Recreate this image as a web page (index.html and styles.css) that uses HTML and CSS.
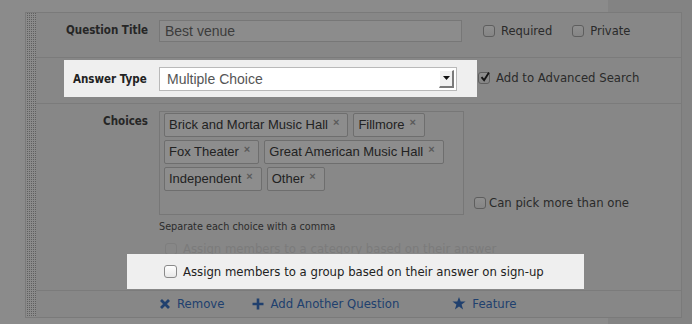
FILE: index.html
```html
<!DOCTYPE html>
<html>
<head>
<meta charset="utf-8">
<link rel="stylesheet" href="styles.css">
</head>
<body>
<div class="panel">
  <div class="handle"></div>
  <div class="main">
    <div class="row row-title">
      <div class="label">Question Title</div>
      <div class="textbox">Best venue</div>
      <label class="check check-req"><span class="box"></span>Required</label>
      <label class="check check-priv"><span class="box"></span>Private</label>
    </div>
    <div class="row row-type">
      <div class="spot spot-type">
        <div class="label label-type">Answer Type</div>
        <div class="select">
          <span class="select-text">Multiple Choice</span>
          <span class="select-btn"><svg width="7" height="4" viewBox="0 0 7 4"><path d="M0 0h7L3.5 4z" fill="#111"/></svg></span>
        </div>
      </div>
      <label class="check check-adv"><span class="box box-on"><svg width="12" height="12" viewBox="0 0 12 12"><path d="M2.5 6.2l2.6 3L10 1.5" fill="none" stroke="#151515" stroke-width="1.9"/></svg></span>Add to Advanced Search</label>
    </div>
    <div class="row row-choices">
      <div class="label label-choices">Choices</div>
      <div class="choices-col">
        <div class="choices-line">
          <div class="tagbox">
            <span class="tag">Brick and Mortar Music Hall<i>×</i></span>
            <span class="tag">Fillmore<i>×</i></span>
            <span class="tag">Fox Theater<i>×</i></span>
            <span class="tag">Great American Music Hall<i>×</i></span>
            <span class="tag">Independent<i>×</i></span>
            <span class="tag">Other<i>×</i></span>
          </div>
          <label class="check check-multi"><span class="box"></span>Can pick more than one</label>
        </div>
        <div class="hint">Separate each choice with a comma</div>
        <label class="check check-faded"><span class="box"></span>Assign members to a category based on their answer</label>
        <div class="spot spot-group">
          <label class="check check-group"><span class="box box-light"></span>Assign members to a group based on their answer on sign-up</label>
        </div>
      </div>
    </div>
    <div class="row row-foot">
      <a class="act act-remove"><svg width="12" height="12" viewBox="0 0 12 12"><path d="M2 2l8 8M10 2l-8 8" stroke="#20406e" stroke-width="2.8" stroke-linecap="butt"/></svg>Remove</a>
      <a class="act act-add"><svg width="12" height="12" viewBox="0 0 12 12"><path d="M6 0.5v11M0.5 6h11" stroke="#20406e" stroke-width="2.6"/></svg>Add Another Question</a>
      <a class="act act-feat"><svg width="14" height="13" viewBox="0 0 14 13"><path d="M7 0l1.7 4.6h4.9l-4 2.9 1.5 4.9L7 9.5l-4.1 2.9 1.5-4.9-4-2.9h4.9z" fill="#20406e"/></svg>Feature</a>
    </div>
  </div>
</div>
</body>
</html>
```
FILE: styles.css
```css
html, body {
  margin: 0;
  padding: 0;
}
body {
  width: 692px;
  height: 324px;
  overflow: hidden;
  background: linear-gradient(to right, #8b8b8b 608px, #838383 608px);
  font-family: "DejaVu Sans", "Noto Sans", sans-serif;
  color: #262626;
}
.panel {
  box-sizing: border-box;
  margin: 12px 0 0 25px;
  width: 657px;
  height: 306px;
  border: 1px solid #7a7a7a;
  background: #878787;
  display: flex;
}
.handle {
  width: 10px;
  flex: none;
  background: #8b8b8b conic-gradient(#5f5f5f 25%, transparent 0) 0 0 / 2px 2px;
}
.main {
  flex: 1;
  display: flex;
  flex-direction: column;
}
.row {
  display: flex;
  box-sizing: border-box;
}
.label {
  width: 112px;
  flex: none;
  text-align: right;
  font-weight: bold;
  font-size: 11.5px;
  font-stretch: condensed;
  color: #262626;
  white-space: nowrap;
}
.row-title {
  height: 45px;
  border-bottom: 1px solid #7b7b7b;
  padding-top: 7px;
  align-items: flex-start;
}
.row-title .label {
  line-height: 21px;
  margin-right: 11px;
}
.textbox {
  box-sizing: border-box;
  width: 303px;
  height: 22px;
  border: 1px solid #777;
  background: #8c8c8c;
  font-family: "Liberation Sans", Arial, sans-serif;
  font-size: 14px;
  line-height: 20px;
  padding-left: 5px;
  color: #3c3c3c;
}
.check {
  display: flex;
  align-items: center;
  font-size: 11.7px;
  color: #2a2a2a;
  white-space: nowrap;
}
.box {
  box-sizing: border-box;
  width: 12px;
  height: 12px;
  border: 1px solid #5e5e5e;
  border-radius: 3px;
  background: linear-gradient(#8f8f8f, #858585);
  margin-right: 6px;
  flex: none;
  position: relative;
}
.box svg {
  position: absolute;
  left: 0;
  top: -2px;
}
.check-req {
  margin-left: 21px;
  height: 21px;
  font-size: 11.5px;
}
.check-priv {
  margin-left: 20px;
  height: 21px;
  font-size: 11.5px;
}
.row-type {
  height: 46px;
  border-bottom: 1px solid #7b7b7b;
  padding-top: 2px;
  align-items: flex-start;
}
.spot {
  background: #efefef;
  box-sizing: border-box;
}
.spot-type {
  margin-left: 28px;
  width: 413px;
  height: 37px;
  display: flex;
  align-items: center;
  padding-left: 9px;
}
.label-type {
  width: 75px;
  color: #222;
  margin-right: 11px;
  text-align: left;
}
.select {
  box-sizing: border-box;
  width: 298px;
  height: 24px;
  border: 1px solid #b9b9b9;
  background: #fff;
  display: flex;
  align-items: center;
  justify-content: space-between;
  padding: 0 2px 0 7px;
}
.select-text {
  font-family: "Liberation Sans", Arial, sans-serif;
  font-size: 14px;
  color: #555;
}
.select-btn {
  box-sizing: border-box;
  width: 15px;
  height: 18px;
  background: #f1f1f1;
  border-right: 2px solid #7a7a7a;
  border-bottom: 2px solid #7a7a7a;
  border-top: 1px solid #fff;
  border-left: 1px solid #fff;
  display: flex;
  align-items: center;
  justify-content: center;
}
.check-adv {
  margin-left: 1px;
  height: 35px;
}
.row-choices {
  padding-top: 7px;
  height: 187px;
  border-bottom: 1px solid #7b7b7b;
  align-items: flex-start;
}
.label-choices {
  margin-right: 11px;
  line-height: 14px;
  padding-top: 3px;
}
.choices-col {
  display: flex;
  flex-direction: column;
}
.choices-line {
  display: flex;
  align-items: flex-end;
}
.tagbox {
  box-sizing: border-box;
  width: 305px;
  height: 104px;
  border: 1px solid #777;
  background: #888;
  padding: 1px 4px;
  display: flex;
  flex-wrap: wrap;
  align-content: flex-start;
  gap: 3px 5px;
}
.tag {
  box-sizing: border-box;
  height: 24px;
  border: 1px solid #6e6e6e;
  border-radius: 2px;
  background: #8d8d8d;
  font-family: "Liberation Sans", Arial, sans-serif;
  font-size: 13px;
  line-height: 22px;
  padding: 0 8px 0 4px;
  color: #222;
  display: flex;
}
.tag i {
  font-style: normal;
  font-weight: bold;
  font-size: 11px;
  color: #5a5a5a;
  margin-left: 5px;
  line-height: 17px;
}
.check-multi {
  margin-left: 10px;
  margin-bottom: 5px;
}
.check-multi .box {
  margin-right: 3px;
}
.hint {
  font-size: 9.7px;
  margin-top: 6px;
  height: 12px;
  line-height: 12px;
  color: #2c2c2c;
  white-space: nowrap;
}
.check-faded {
  margin-top: 9px;
  height: 14px;
  padding-left: 6px;
  color: #7b7b7b;
}
.check-faded .box {
  border-color: #7e7e7e;
  background: #878787;
}
.spot-group {
  position: relative;
  margin-left: -32px;
  margin-top: -2px;
  width: 457px;
  height: 35px;
  display: flex;
  align-items: center;
  padding-left: 37px;
}
.check-group {
  color: #222;
}
.box-light {
  width: 13px;
  height: 13px;
  border-color: #8a8a8a;
  background: linear-gradient(#fff, #e8e8e8);
  margin-right: 6px;
}
.row-foot {
  flex: 1;
  align-items: center;
  padding-left: 123px;
  padding-bottom: 1px;
}
.act {
  display: flex;
  align-items: center;
  font-size: 11.7px;
  color: #20406e;
  white-space: nowrap;
}
.act svg {
  margin-right: 6px;
}
.act-add {
  margin-left: 28px;
}
.act-feat {
  margin-left: 53px;
}
```
